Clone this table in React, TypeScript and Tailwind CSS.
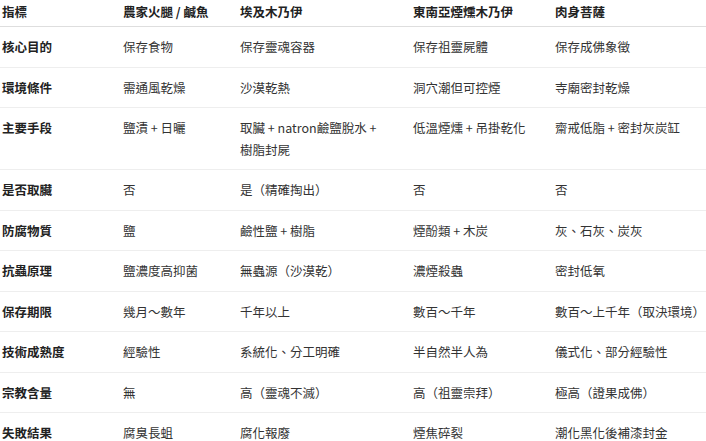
import React from 'react';

const headers = ['指標', '農家火腿 / 鹹魚', '埃及木乃伊', '東南亞煙燻木乃伊', '肉身菩薩'];

const rows: string[][] = [
  ['核心目的', '保存食物', '保存靈魂容器', '保存祖靈屍體', '保存成佛象徵'],
  ['環境條件', '需通風乾燥', '沙漠乾熱', '洞穴潮但可控煙', '寺廟密封乾燥'],
  ['主要手段', '鹽漬 + 日曬', '取臟 + natron鹼鹽脫水 + 樹脂封屍', '低溫煙燻 + 吊掛乾化', '齋戒低脂 + 密封灰炭缸'],
  ['是否取臟', '否', '是（精確掏出）', '否', '否'],
  ['防腐物質', '鹽', '鹼性鹽 + 樹脂', '煙酚類 + 木炭', '灰、石灰、炭灰'],
  ['抗蟲原理', '鹽濃度高抑菌', '無蟲源（沙漠乾）', '濃煙殺蟲', '密封低氧'],
  ['保存期限', '幾月～數年', '千年以上', '數百～千年', '數百～上千年（取決環境）'],
  ['技術成熟度', '經驗性', '系統化、分工明確', '半自然半人為', '儀式化、部分經驗性'],
  ['宗教含量', '無', '高（靈魂不滅）', '高（祖靈崇拜）', '極高（證果成佛）'],
  ['失敗結果', '腐臭長蛆', '腐化報廢', '煙焦碎裂', '潮化黑化後補漆封金'],
];

const cols = 'grid grid-cols-[121px_117px_173px_142px_1fr]';

export default function App() {
  return (
    <div
      lang="zh-Hant"
      className="w-[706px] h-[441px] overflow-hidden bg-white text-[12.5px] leading-[21.5px] text-[#333]"
      style={{ fontFamily: '"Noto Sans CJK TC", "Noto Sans", sans-serif' }}
    >
      <div className={`${cols} h-[27px] border-b border-[#dedede] font-bold text-[#222]`}>
        {headers.map((h) => (
          <div key={h} className="pl-[2px] pt-[1px] whitespace-nowrap">{h}</div>
        ))}
      </div>
      {rows.map((r) => (
        <div key={r[0]} className={`${cols} border-b border-[#eeeeee] py-[9px]`}>
          {r.map((c, i) => (
            <div
              key={i}
              className={`pl-[2px] ${i === 4 ? 'pr-0 whitespace-nowrap' : i === 2 ? 'pr-[30px]' : 'pr-[18px]'} ${i === 0 ? 'font-bold text-[#222]' : ''}`}
            >
              {c}
            </div>
          ))}
        </div>
      ))}
    </div>
  );
}
